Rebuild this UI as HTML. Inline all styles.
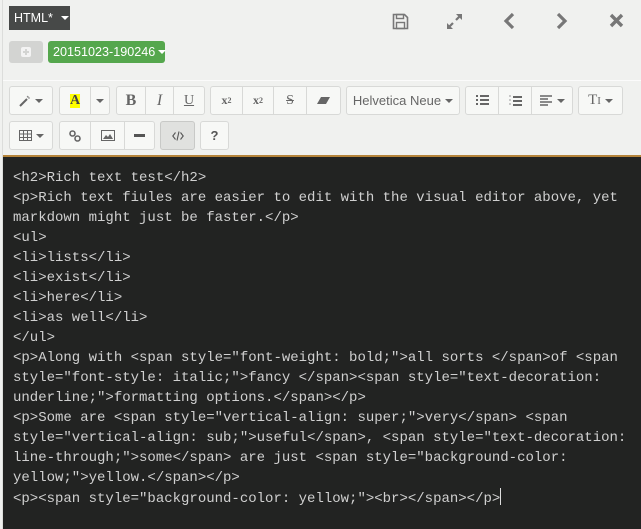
<!DOCTYPE html>
<html><head><meta charset="utf-8"><style>
*{margin:0;padding:0;box-sizing:border-box}
body{width:641px;height:529px;background:#f0f1ef;position:relative;overflow:hidden;font-family:"Liberation Sans",sans-serif}
.abs{position:absolute}
.vline{left:2px;top:0;width:1px;height:529px;background:#dcdddb}
.sep{left:3px;top:80px;width:638px;height:1px;background:#fbfbfb}
.btn{position:absolute;height:29px;border:1px solid #d8d9d7;background:#f7f8f6;color:#666;display:flex;align-items:center;justify-content:center;font-size:13px;white-space:nowrap}
.caret{display:inline-block;width:0;height:0;border-left:4px solid transparent;border-right:4px solid transparent;border-top:4px solid #666;margin-left:4px}
.code{left:3px;top:155px;width:638px;height:374px;background:#222322;border-top:2px solid #b5843a}
pre{position:absolute;left:10px;top:11px;font-family:"Liberation Mono",monospace;font-size:14px;line-height:20px;color:#d0d0d0;white-space:pre}
.cur{display:inline-block;width:1px;height:17px;background:#ddd;vertical-align:-3px}
</style></head><body>
<div class="abs vline"></div>
<div class="abs" style="left:9px;top:6px;width:61px;height:24px;background:#474948;color:#fff;font-size:12.5px;display:flex;align-items:center;padding-left:5px;white-space:nowrap">HTML*<span class="caret" style="border-top-color:#fff;margin-left:8px"></span></div>
<div class="abs" style="left:9px;top:41px;width:34px;height:22px;background:#d3d4d2;border-radius:3px"><div class="abs" style="left:12px;top:6px;width:10px;height:10px;background:#f3f3f3;border-radius:2px"></div><div class="abs" style="left:14px;top:10px;width:6px;height:2px;background:#d3d4d2"></div><div class="abs" style="left:16px;top:8px;width:2px;height:6px;background:#d3d4d2"></div></div>
<div class="abs" style="left:48px;top:41px;width:117px;height:22px;background:#55a74d;border-radius:3px;color:#fff;font-size:12.6px;display:flex;align-items:center;padding-left:5px;white-space:nowrap">20151023-190246<span class="caret" style="border-top-color:#fff;margin-left:3px"></span></div>
<svg class="abs" style="left:392px;top:13px" width="17" height="17" viewBox="0 0 17 17"><path d="M1.5 1.5h11l3 3v11h-14z" fill="none" stroke="#777" stroke-width="1.6"/><rect x="4.5" y="1.5" width="7" height="4" fill="none" stroke="#777" stroke-width="1.4"/><rect x="4.5" y="9.5" width="8" height="6" fill="none" stroke="#777" stroke-width="1.4"/></svg>
<svg class="abs" style="left:446px;top:13px" width="17" height="17" viewBox="0 0 17 17"><path d="M2 15l5-5M10 7l5-5" stroke="#777" stroke-width="2.2"/><path d="M1 16v-6l6 6zM16 1v6l-6-6z" fill="#777"/></svg>
<svg class="abs" style="left:502px;top:12px" width="14" height="18" viewBox="0 0 14 18"><path d="M11 2L4 9l7 7" fill="none" stroke="#777" stroke-width="3.2"/></svg>
<svg class="abs" style="left:555px;top:12px" width="14" height="18" viewBox="0 0 14 18"><path d="M3 2l7 7-7 7" fill="none" stroke="#777" stroke-width="3.2"/></svg>
<svg class="abs" style="left:609px;top:13px" width="15" height="15" viewBox="0 0 15 15"><path d="M2 2l11 11M13 2L2 13" stroke="#777" stroke-width="3.4"/></svg>
<div class="abs sep"></div>
<div class="btn" style="left:9px;top:86px;width:44px;border-radius:3px"><svg width="12" height="12"><path d="M1 11l7-7" stroke="#666" stroke-width="2"/><path d="M9 1v2M11 3H9M8 1l1 1" stroke="#888" stroke-width="1"/></svg><span class="caret"></span></div>
<div class="btn" style="left:59px;top:86px;width:32px;border-radius:3px 0 0 3px"><span style="background:#ff0;font-family:'Liberation Serif';font-weight:bold;color:#444;font-size:14px;line-height:14px">A</span></div>
<div class="btn" style="left:90px;top:86px;width:20px;border-radius:0 3px 3px 0"><span class="caret" style="margin:0"></span></div>
<div class="btn" style="left:116px;top:86px;width:30px;border-radius:3px 0 0 3px;font-family:'Liberation Serif';font-weight:bold;font-size:16px">B</div>
<div class="btn" style="left:145px;top:86px;width:29px;font-family:'Liberation Serif';font-style:italic;font-size:16px">I</div>
<div class="btn" style="left:173px;top:86px;width:32px;border-radius:0 3px 3px 0;font-family:'Liberation Serif';text-decoration:underline;font-size:14px">U</div>
<div class="btn" style="left:210px;top:86px;width:33px;border-radius:3px 0 0 3px;font-family:'Liberation Serif';font-weight:bold;font-size:12px">x<sup style="font-size:8px">2</sup></div>
<div class="btn" style="left:242px;top:86px;width:32px;font-family:'Liberation Serif';font-weight:bold;font-size:12px">x<sub style="font-size:8px">2</sub></div>
<div class="btn" style="left:273px;top:86px;width:34px;font-family:'Liberation Serif';text-decoration:line-through;font-size:14px">S</div>
<div class="btn" style="left:306px;top:86px;width:35px;border-radius:0 3px 3px 0"><svg width="13" height="9"><path d="M4 1h9l-4 7H0z" fill="#666"/></svg></div>
<div class="btn" style="left:346px;top:86px;width:114px;border-radius:3px;font-size:13px">Helvetica Neue<span class="caret"></span></div>
<div class="btn" style="left:465px;top:86px;width:34px;border-radius:3px 0 0 3px"><svg width="13" height="11"><path d="M0 1h2M0 5h2M0 9h2M4 1h9M4 5h9M4 9h9" stroke="#666" stroke-width="2"/></svg></div>
<div class="btn" style="left:498px;top:86px;width:34px"><svg width="13" height="12"><path d="M4 2h9M4 6h9M4 10h9" stroke="#666" stroke-width="2"/><path d="M0 1h2M0 5h2M0 9h2" stroke="#999" stroke-width="1"/></svg></div>
<div class="btn" style="left:531px;top:86px;width:42px;border-radius:0 3px 3px 0"><svg width="13" height="11"><path d="M0 1h12M0 4h8M0 7h12M0 10h8" stroke="#666" stroke-width="1.6"/></svg><span class="caret"></span></div>
<div class="btn" style="left:578px;top:86px;width:45px;border-radius:3px;font-family:'Liberation Serif';font-size:15px">T<span style="font-size:11px">I</span><span class="caret"></span></div>
<div class="btn" style="left:9px;top:121px;width:44px;border-radius:3px"><svg width="13" height="11"><rect x=".5" y=".5" width="12" height="10" fill="none" stroke="#666"/><path d="M0 4h13M0 7.5h13M4.5 0v11M8.5 0v11" stroke="#666"/></svg><span class="caret"></span></div>
<div class="btn" style="left:59px;top:121px;width:32px;border-radius:3px 0 0 3px"><svg width="12" height="12"><circle cx="3.5" cy="3.5" r="2.5" fill="none" stroke="#666" stroke-width="1.6"/><circle cx="8.5" cy="8.5" r="2.5" fill="none" stroke="#666" stroke-width="1.6"/></svg></div>
<div class="btn" style="left:90px;top:121px;width:35px"><svg width="14" height="11"><rect x=".5" y=".5" width="13" height="10" fill="none" stroke="#666"/><path d="M2 9l3-4 2 2 2-3 3 5z" fill="#666"/></svg></div>
<div class="btn" style="left:124px;top:121px;width:31px;border-radius:0 3px 3px 0"><div style="width:11px;height:3px;background:#555"></div></div>
<div class="btn" style="left:160px;top:121px;width:35px;border-radius:3px;background:#e0e1df;border-color:#c8c9c7"><svg width="12" height="10"><path d="M3.5 1.5L.8 5l2.7 3.5M8.5 1.5L11.2 5 8.5 8.5M7 0.5L5 9.5" fill="none" stroke="#555" stroke-width="1.1"/></svg></div>
<div class="btn" style="left:200px;top:121px;width:29px;border-radius:3px;font-weight:bold;font-size:13px;color:#555">?</div>
<div class="abs code"><pre>&lt;h2&gt;Rich text test&lt;/h2&gt;
&lt;p&gt;Rich text fiules are easier to edit with the visual editor above, yet
markdown might just be faster.&lt;/p&gt;
&lt;ul&gt;
&lt;li&gt;lists&lt;/li&gt;
&lt;li&gt;exist&lt;/li&gt;
&lt;li&gt;here&lt;/li&gt;
&lt;li&gt;as well&lt;/li&gt;
&lt;/ul&gt;
&lt;p&gt;Along with &lt;span style="font-weight: bold;"&gt;all sorts &lt;/span&gt;of &lt;span
style="font-style: italic;"&gt;fancy &lt;/span&gt;&lt;span style="text-decoration:
underline;"&gt;formatting options.&lt;/span&gt;&lt;/p&gt;
&lt;p&gt;Some are &lt;span style="vertical-align: super;"&gt;very&lt;/span&gt; &lt;span
style="vertical-align: sub;"&gt;useful&lt;/span&gt;, &lt;span style="text-decoration:
line-through;"&gt;some&lt;/span&gt; are just &lt;span style="background-color:
yellow;"&gt;yellow.&lt;/span&gt;&lt;/p&gt;
&lt;p&gt;&lt;span style="background-color: yellow;"&gt;&lt;br&gt;&lt;/span&gt;&lt;/p&gt;<span class="cur"></span></pre></div>
</body></html>
